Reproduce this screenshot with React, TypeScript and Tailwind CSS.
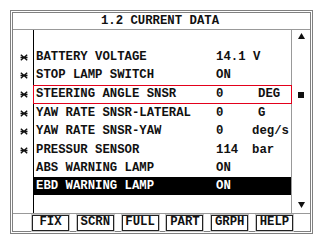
import React from 'react'

type Row = { name: string; value: string; unit?: string; unitPad?: boolean; star?: boolean; boxed?: boolean; selected?: boolean; h: string }

const ROWS: Row[] = [
  { name: 'BATTERY VOLTAGE', value: '14.1 V', star: true, h: 'h-[18px]' },
  { name: 'STOP LAMP SWITCH', value: 'ON', star: true, h: 'h-[19px]' },
  { name: 'STEERING ANGLE SNSR', value: '0', unit: 'DEG', unitPad: true, star: true, boxed: true, h: 'h-[19px]' },
  { name: 'YAW RATE SNSR-LATERAL', value: '0', unit: 'G', unitPad: true, star: true, h: 'h-[18px]' },
  { name: 'YAW RATE SNSR-YAW', value: '0', unit: 'deg/s', star: true, h: 'h-[19px]' },
  { name: 'PRESSUR SENSOR', value: '114', unit: 'bar', star: true, h: 'h-[18px]' },
  { name: 'ABS WARNING LAMP', value: 'ON', h: 'h-[18px]' },
  { name: 'EBD WARNING LAMP', value: 'ON', selected: true, h: 'h-[18px]' },
]

const BUTTONS = ['FIX', 'SCRN', 'FULL', 'PART', 'GRPH', 'HELP']

function Star() {
  return (
    <svg width="8" height="7" viewBox="0 0 8 7" className="block">
      <path d="M0.8 0.8 L4 3.5 L0.8 6.2 M7.2 0.8 L4 3.5 L7.2 6.2 M0.5 3.5 H7.5" stroke="#111" strokeWidth="1.4" fill="none" />
    </svg>
  )
}

function RowBody({ r }: { r: Row }) {
  let cls = 'h-full grid grid-cols-[180px_36px_1fr] items-center pl-[2px]'
  if (r.boxed) cls = 'relative z-10 -mx-px h-full grid grid-cols-[180px_36px_1fr] items-center pl-[2px] bg-white border border-solid border-[#e3001b]'
  if (r.selected) cls = 'h-full grid grid-cols-[180px_36px_1fr] items-center pl-[2px] bg-black text-white'
  return (
    <div className={cls}>
      <span className="whitespace-nowrap">{r.name}</span>
      <span className="whitespace-nowrap">{r.value}</span>
      <span className={r.unitPad ? 'whitespace-nowrap pl-[6px]' : 'whitespace-nowrap'}>{r.unit}</span>
    </div>
  )
}

export default function App() {
  return (
    <div className="w-[324px] h-[242px] bg-white pt-[10px] pl-[10px] text-[#111] font-mono font-bold text-[12.3px] leading-none">
      <div className="w-[303px] h-[224px] border-[3px] border-double border-[#808080] flex flex-col">
        <div className="h-[17px] border-b border-[#999999] flex items-center justify-center pr-[3px]">
          1.2 CURRENT DATA
        </div>

        <div className="h-[183px] flex">
          {/* marker column */}
          <div className="w-[21px] border-r border-black pt-[18px]">
            {ROWS.map((r, i) => (
              <div key={i} className={`${r.h} flex items-center justify-center pl-[1px]`}>
                {r.star && <Star />}
              </div>
            ))}
          </div>

          {/* data list */}
          <div className="w-[257px] pt-[18px]">
            {ROWS.map((r, i) => (
              <div key={i} className={r.h}>
                <RowBody r={r} />
              </div>
            ))}
          </div>

          {/* scroll column */}
          <div className="flex-1 border-l border-[#999999] flex flex-col items-center pt-[3px] pb-[5px]">
            <svg width="7" height="6" viewBox="0 0 7 6" className="block">
              <path d="M3.5 0 L7 6 H0 Z" fill="#111" />
            </svg>
            <div className="mt-[53px] w-[6px] h-[6px] bg-[#111]" />
            <svg width="7" height="6" viewBox="0 0 7 6" className="block mt-auto">
              <path d="M0 0 H7 L3.5 6 Z" fill="#111" />
            </svg>
          </div>
        </div>

        <div className="flex-1 border-t border-[#999999] flex items-center pl-[19px] gap-[7.8px]">
          {BUTTONS.map((b) => (
            <div key={b} className="w-[37px] h-[16px] border border-[#222222] shadow-[0_0_0_1px_#c4c4c4] flex items-center justify-center">
              {b}
            </div>
          ))}
        </div>
      </div>
    </div>
  )
}
